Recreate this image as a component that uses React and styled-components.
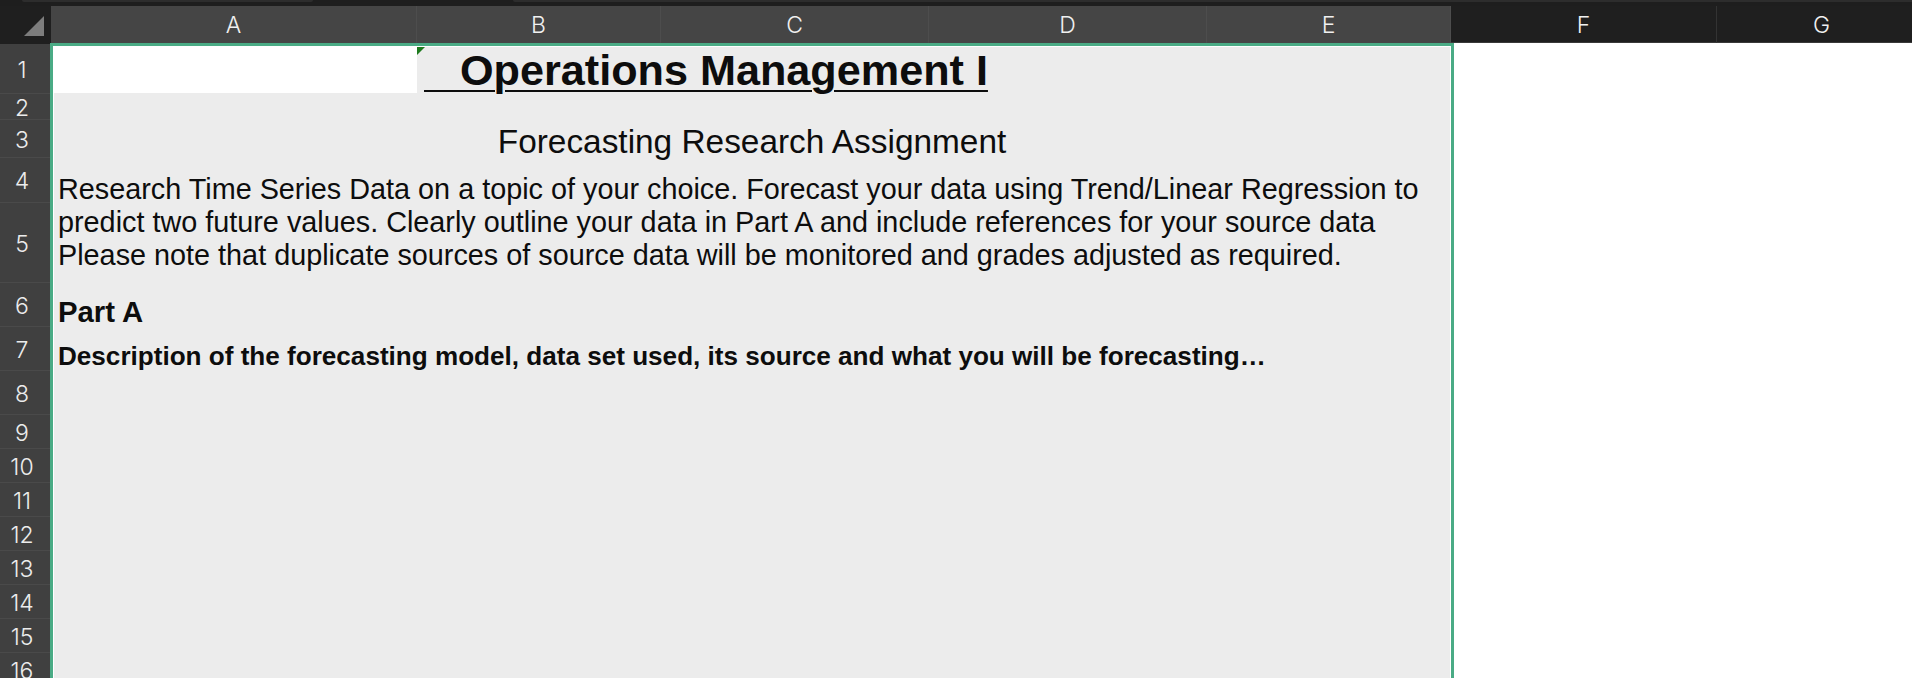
import React from "react";
import styled, { createGlobalStyle } from "styled-components";

const GlobalStyle = createGlobalStyle`
  html, body {
    margin: 0;
    padding: 0;
    background: #ffffff;
    overflow: hidden;
  }
  * {
    box-sizing: border-box;
  }
`;

const columns = [
  { name: "A", width: 366, selected: true },
  { name: "B", width: 244, selected: true },
  { name: "C", width: 268, selected: true },
  { name: "D", width: 278, selected: true },
  { name: "E", width: 244, selected: true },
  { name: "F", width: 266, selected: false },
  { name: "G", width: 210, selected: false },
];

const rowHeights = [50, 26, 38, 45, 80, 44, 44, 44, 34, 34, 34, 34, 34, 34, 34, 34];

const App = () => {
  return (
    <Page>
      <GlobalStyle />
      <TopStrip>
        <Tab left={22} width={291} />
        <Tab left={200} width={1500} />
      </TopStrip>

      <HeaderRow>
        <Corner>
          <svg width="20" height="20" viewBox="0 0 20 20">
            <polygon points="20,0 20,20 0,20" fill="#7d7d7d" />
          </svg>
        </Corner>
        {columns.map(col => (
          <ColHeader key={col.name} w={col.width} selected={col.selected}>
            {col.name}
          </ColHeader>
        ))}
      </HeaderRow>

      <Body>
        <RowHeaders>
          {rowHeights.map((h, i) => (
            <RowNum key={i} h={h}>
              {i + 1}
            </RowNum>
          ))}
        </RowHeaders>

        <Selection>
          <Sheet>
            <ActiveCell />
            <TitleCell>
              <Title>{"   Operations Management I"}</Title>
            </TitleCell>
            <SubtitleCell>Forecasting Research Assignment</SubtitleCell>
            <IntroCell>
              <Line>Research Time Series Data on a topic of your choice. Forecast your data using Trend/Linear Regression to</Line>
              <Line>predict two future values. Clearly outline your data in Part A and include references for your source data</Line>
              <Line>Please note that duplicate sources of source data will be monitored and grades adjusted as required.</Line>
            </IntroCell>
            <BoldCell row={6} size={29.3} pt={15}>Part A</BoldCell>
            <BoldCell row={7} size={26.1} pt={16}>
              Description of the forecasting model, data set used, its source and what you will be forecasting…
            </BoldCell>
          </Sheet>
        </Selection>

        <FreeArea />
      </Body>
    </Page>
  );
};

export default App;

const Page = styled.div`
  width: 1912px;
  height: 678px;
  overflow: hidden;
  display: flex;
  flex-direction: column;
  background: #ffffff;
`;

const TopStrip = styled.div`
  height: 6px;
  background: #1e1e1e;
  display: flex;
  flex-shrink: 0;
`;

const Tab = styled.div`
  margin-left: ${props => props.left}px;
  width: ${props => props.width}px;
  flex-shrink: 0;
  height: 2px;
  background: #2d2d2d;
  border-radius: 0 0 3px 3px;
`;

const HeaderRow = styled.div`
  height: 38px;
  display: flex;
  flex-shrink: 0;
  background: #1f1f1f;
  overflow: hidden;
`;

const Corner = styled.div`
  width: 51px;
  flex-shrink: 0;
  height: 38px;
  background: #1f1f1f;
  display: flex;
  align-items: flex-end;
  justify-content: flex-end;
  padding: 0 7px 8px 0;
`;

const ColHeader = styled.div`
  width: ${props => props.w}px;
  flex-shrink: 0;
  height: 38px;
  background: ${props => (props.selected ? "#454545" : "#1f1f1f")};
  border-right: 1px solid ${props => (props.selected ? "#4d4d4d" : "#333333")};
  border-bottom: 2px solid ${props => (props.selected ? "#454545" : "#3a3a3a")};
  color: #f0f0f0;
  font-family: Inter, "Liberation Sans", sans-serif;
  font-weight: 300;
  font-size: 23px;
  display: flex;
  align-items: center;
  justify-content: center;
  padding-top: 2px;
`;

const Body = styled.div`
  flex: 1;
  display: flex;
  align-items: flex-start;
  margin-top: -1px;
`;

const RowHeaders = styled.div`
  width: 50px;
  flex-shrink: 0;
  display: flex;
  flex-direction: column;
  margin-top: 1px;
`;

const RowNum = styled.div`
  height: ${props => props.h}px;
  background: #404040;
  border-bottom: 1px solid #4a4a4a;
  color: #ececec;
  font-family: Inter, "Liberation Sans", sans-serif;
  font-weight: 300;
  font-size: 23px;
  display: flex;
  align-items: center;
  justify-content: center;
  padding-right: 6px;
  padding-top: 2px;
`;

const Selection = styled.div`
  width: 1404px;
  flex-shrink: 0;
  border: 3px solid #4aab85;
  border-bottom: none;
  padding: 1px 1px 0 1px;
  background: #ffffff;
`;

const Sheet = styled.div`
  display: grid;
  grid-template-columns: 363px 244px 268px 278px 243px;
  grid-template-rows: 46px 26px 38px 45px 80px 44px 44px 44px repeat(8, 34px);
  background: #ececec;
  font-family: "Liberation Sans", Arial, sans-serif;
  color: #0d0d0d;
`;

const ActiveCell = styled.div`
  grid-column: 1;
  grid-row: 1;
  background: #ffffff;
`;

const TitleCell = styled.div`
  grid-column: 2 / span 4;
  grid-row: 1;
  position: relative;
  padding-left: 7px;
  display: flex;
  align-items: center;
  padding-bottom: 1px;

  &::before {
    content: "";
    position: absolute;
    left: 0;
    top: 0;
    border-top: 8px solid #1d7a1d;
    border-right: 8px solid transparent;
  }
`;

const Title = styled.span`
  white-space: pre;
  font-size: 43.2px;
  font-weight: 700;
  line-height: 44px;
  text-decoration: underline;
  text-decoration-thickness: 2px;
  text-underline-offset: 5px;
`;

const SubtitleCell = styled.div`
  grid-column: 1 / span 5;
  grid-row: 3;
  font-size: 33.4px;
  padding-top: 8px;
  display: flex;
  align-items: center;
  justify-content: center;
`;

const IntroCell = styled.div`
  grid-column: 1 / span 5;
  grid-row: 4 / span 2;
  padding-left: 4px;
  padding-top: 5px;
  display: flex;
  flex-direction: column;
  justify-content: center;
  font-size: 28.8px;
  line-height: 33px;
`;

const Line = styled.div`
  white-space: nowrap;
`;

const BoldCell = styled.div`
  grid-column: 1 / span 5;
  grid-row: ${props => props.row};
  padding-left: 4px;
  padding-top: ${props => props.pt}px;
  font-size: ${props => props.size}px;
  font-weight: 700;
  display: flex;
  align-items: center;
  white-space: nowrap;
`;

const FreeArea = styled.div`
  flex: 1;
  align-self: stretch;
  background: #ffffff;
`;
